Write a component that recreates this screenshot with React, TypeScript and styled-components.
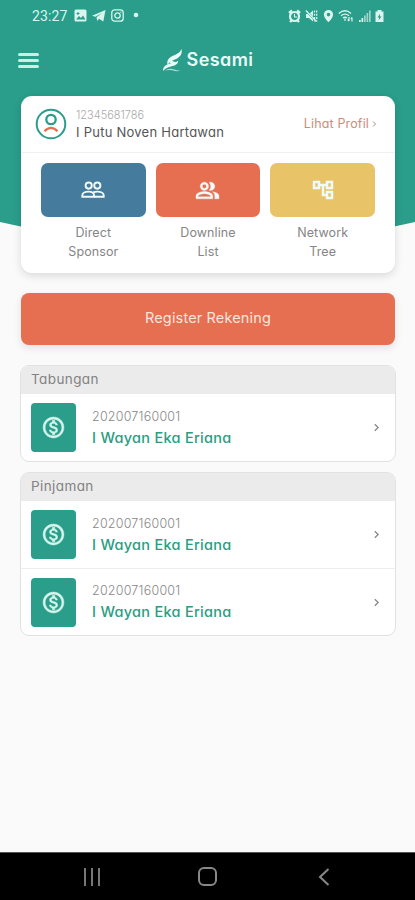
import React from 'react';
import styled, { createGlobalStyle } from 'styled-components';
import {
  MdOutlinePeopleAlt,
  MdOutlineAccountTree,
  MdOutlineMonetizationOn,
  MdChevronRight,
} from 'react-icons/md';

const GlobalStyle = createGlobalStyle`
  * { box-sizing: border-box; }
  body { margin: 0; background: #fafafa; }
`;

const Screen = styled.div`
  position: relative;
  display: flex;
  flex-direction: column;
  width: 415px;
  height: 900px;
  overflow: hidden;
  background: #fafafa;
  font-family: Inter, 'Open Sans', sans-serif;
  font-feature-settings: 'cv11' 1;
  isolation: isolate;

  &::before {
    content: '';
    position: absolute;
    inset: 0 0 auto;
    height: 267px;
    z-index: -1;
    background: #2a9d8b;
    clip-path: polygon(0 0, 100% 0, 100% 222px, 50% 100%, 0 222px);
  }
`;

const StatusBar = styled.div`
  display: flex;
  align-items: center;
  justify-content: space-between;
  height: 31px;
  padding: 0 31px 0 32px;
  color: #d9f5ee;
`;

const StatusGroup = styled.div<{ $gap: number }>`
  display: flex;
  align-items: center;
  gap: ${(p) => p.$gap}px;
  svg { display: block; }
`;

const Clock = styled.span`
  width: 37px;
  font: 400 14px/16px Roboto, sans-serif;
  letter-spacing: 0.1px;
`;

const AppBar = styled.header`
  display: grid;
  grid-template-columns: 1fr auto 1fr;
  align-items: center;
  height: 58px;
  padding: 0 18px;
`;

const MenuButton = styled.button`
  display: flex;
  flex-direction: column;
  justify-content: space-between;
  width: 21px;
  height: 15px;
  padding: 0;
  border: 0;
  background: none;
`;

const MenuLine = styled.span`
  height: 3px;
  border-radius: 1.5px;
  background: #cdeee5;
`;

const Brand = styled.div`
  display: flex;
  align-items: center;
  gap: 4px;
  color: #e9fbf6;
  font-size: 18px;
  font-weight: 600;
  line-height: 24px;
  letter-spacing: 0.4px;
`;

const Main = styled.main`
  display: flex;
  flex: 1;
  flex-direction: column;
  padding: 7px 20px 0 21px;
`;

const ProfileCard = styled.section`
  height: 177px;
  border-radius: 11px;
  background: #fff;
  box-shadow: 0 3px 9px rgba(0, 0, 0, 0.13);
`;

const ProfileRow = styled.div`
  display: flex;
  align-items: center;
  height: 57px;
  padding: 0 18px 0 14px;
  border-bottom: 1px solid #f0f0f0;
`;

const ProfileText = styled.div`
  flex: 1;
  margin-left: 9px;
`;

const MemberId = styled.div`
  color: #aaa;
  font-size: 11px;
  font-weight: 300;
  line-height: 16px;
`;

const MemberName = styled.div`
  color: #555;
  font-size: 13px;
  line-height: 19px;
  letter-spacing: 0.25px;
`;

const ProfileLink = styled.a`
  display: flex;
  align-items: center;
  gap: 3px;
  color: #ce8c7b;
  font-size: 12.5px;
  line-height: 18px;
  letter-spacing: 0.15px;
`;

const Actions = styled.div`
  display: grid;
  grid-template-columns: repeat(3, 1fr);
  gap: 10px;
  padding: 10px 20px 0;
`;

const Action = styled.div`
  display: flex;
  flex-direction: column;
  align-items: center;
`;

const ActionTile = styled.button<{ $color: string }>`
  display: grid;
  place-items: center;
  width: 100%;
  height: 54px;
  margin-bottom: 6px;
  padding: 0;
  border: 0;
  border-radius: 7px;
  background: ${(p) => p.$color};
  color: #f0fafa;
  svg { display: block; }
  svg > path[fill='none'] { stroke: none; }
`;

const ActionLabel = styled.span`
  color: #858585;
  font-size: 12.5px;
  line-height: 19px;
  letter-spacing: 0.1px;
`;

const RegisterButton = styled.button`
  flex: none;
  height: 52px;
  margin: 20px 0;
  padding: 0 0 3px;
  border: 0;
  border-radius: 8px;
  background: #e66f51;
  box-shadow: 0 3px 8px rgba(0, 0, 0, 0.1);
  color: #fbe4dc;
  font: inherit;
  font-feature-settings: inherit;
  font-size: 14.5px;
  letter-spacing: 0.15px;
`;

const AccountPanel = styled.section`
  margin: 0 -1px 10px;
  border: 1px solid #e2e2e2;
  border-radius: 9px;
  background: #fff;
  overflow: hidden;
`;

const PanelTitle = styled.h2`
  height: 28px;
  margin: 0;
  padding: 0 10px;
  background: #ebebeb;
  color: #828282;
  font-size: 13.5px;
  font-weight: 400;
  line-height: 27px;
  letter-spacing: 0.4px;
`;

const AccountRow = styled.div`
  display: flex;
  align-items: center;
  height: 67px;
  padding: 0 11px 0 10px;
  & + & { border-top: 1px solid #ededed; }
`;

const AccountIcon = styled.div`
  display: grid;
  place-items: center;
  width: 45px;
  height: 49px;
  border-radius: 4px;
  background: #2a9d8b;
  color: #d6f5ec;
  svg > path[fill='none'] { stroke: none; }
`;

const AccountText = styled.div`
  flex: 1;
  margin-left: 16px;
  padding-bottom: 2px;
`;

const AccountNumber = styled.div`
  color: #888;
  font-size: 12.5px;
  font-weight: 300;
  line-height: 21px;
  letter-spacing: 0.22px;
`;

const AccountName = styled.div`
  color: #2a9d7f;
  font-size: 14.5px;
  font-weight: 500;
  line-height: 21px;
  letter-spacing: 0.28px;
`;

const NavBar = styled.nav`
  display: grid;
  grid-template-columns: 116px 116px 116px;
  justify-content: center;
  justify-items: center;
  align-items: center;
  height: 48px;
  border-top: 1px solid #555;
  background: #000;
  svg { display: block; }
`;

function StatusIcons() {
  return (
    <StatusGroup $gap={4.5}>
      <svg width="13" height="14" viewBox="0 0 13 14" fill="none" stroke="currentColor">
        <circle cx="6.5" cy="7.5" r="4.5" strokeWidth="2.2" />
        <path d="M1 4 4 1.5M12 4 9 1.5M2 13l2-2M11 13l-2-2" strokeWidth="2.4" />
        <path d="M6.5 5v3H9" strokeWidth="1.1" />
      </svg>
      <svg width="13" height="14" viewBox="0 0 13 14" fill="currentColor">
        <path d="M1 5h3l4-3.5v11L4 9H1z" />
        <path d="M.8 1.5 12 13" stroke="#2a9d8b" strokeWidth="2" />
        <path d="M.8 1.5 11.5 12.5" stroke="currentColor" strokeWidth="1.4" />
        <path d="M9.5 1.5v11M11.7 1.5v11" stroke="currentColor" strokeWidth="1.3" strokeDasharray="2 1.3" />
      </svg>
      <svg width="11" height="14" viewBox="0 0 11 14" fill="currentColor">
        <path fillRule="evenodd" d="M5.5 1A4.6 4.6 0 0 0 .9 5.6C.9 9 5.5 13.3 5.5 13.3S10.1 9 10.1 5.6A4.6 4.6 0 0 0 5.5 1zm0 2.8a1.8 1.8 0 1 1 0 3.6 1.8 1.8 0 0 1 0-3.6z" />
      </svg>
      <svg width="16" height="14" viewBox="0 0 16 14" fill="none" stroke="currentColor" strokeWidth="1.4">
        <path d="M.8 4.5Q7 -.8 13 4.5M3 6.8Q7 3.5 11 6.8M5 9Q7 7.3 9 9" />
        <path d="M7 9.5v2.5M11 8v4m-1.3-1.5L11 12M14 12.5v-4m-1.2 1.3L14 8.5" strokeWidth="1.2" />
      </svg>
      <svg width="12" height="14" viewBox="0 0 12 14" fill="currentColor">
        <path d="M0 11h1.7v2H0zM2.5 9h1.7v4H2.5z" />
        <path d="M5 6.5h1.7V13H5zM7.5 4h1.7v9H7.5zM10 1.5h1.7V13H10z" opacity=".65" />
      </svg>
      <svg width="9" height="14" viewBox="0 0 9 14" fill="currentColor">
        <path fillRule="evenodd" d="M2.5 1h4v1.5h2V13H.5V2.5h2zM5 5 2.5 8.5h1.6L3.8 11l2.7-3.5H5z" />
      </svg>
    </StatusGroup>
  );
}

function BrandMark() {
  return (
    <svg width="21" height="25" viewBox="0 0 21 25" fill="currentColor">
      <path d="M19.2 .8C21 5.8 18 9.3 13.5 11.3 10.5 12.6 7 14.2 5.6 16.8 4.3 12 7.5 9.4 11.5 7.6 15.5 5.8 18.8 4.3 19.2 .8z" />
      <path d="M16.2 12.8C16 16.5 13 17.5 9 18.5 5.5 19.5 2.8 20.6 1 23c-.2-4.4 3-6.3 7-7.5 3.5-1 6.5-1.2 8.2-2.7z" />
      <path d="M8.5 12.5 14.8 14.6 13 16l-5-1z" />
      <path d="M2.5 22.8q5-3.3 9-1.5 3 1.3 7 1.5-4 1.100-8-.5-4-.8-8 .5z" opacity=".7" />
    </svg>
  );
}

function SponsorIcon() {
  return (
    <svg width="24" height="18" viewBox="0 0 24 18" fill="none" stroke="currentColor" strokeWidth="1.9">
      <circle cx="7.7" cy="4.6" r="3.1" />
      <circle cx="16.3" cy="4.6" r="3.1" />
      <path d="M1.3 15.7v-1.4c0-2.4 3.2-3.7 6.2-3.7s5.5 1.3 5.5 3.7v1.4z" />
      <path d="M12.2 11.4c1.2-.5 2.7-.8 4.2-.8 3 0 6.3 1.3 6.3 3.7v1.4H13" />
    </svg>
  );
}

const actions = [
  { color: '#457b9d', lines: ['Direct', 'Sponsor'], icon: <SponsorIcon /> },
  {
    color: '#e66f51',
    lines: ['Downline', 'List'],
    icon: <MdOutlinePeopleAlt size={25} stroke="currentColor" strokeWidth={0.35} />,
  },
  {
    color: '#e8c368',
    lines: ['Network', 'Tree'],
    icon: <MdOutlineAccountTree size={24} stroke="currentColor" strokeWidth={0.5} />,
  },
];

const panels = [
  { title: 'Tabungan', rows: [{ number: '202007160001', name: 'I Wayan Eka Eriana' }] },
  {
    title: 'Pinjaman',
    rows: [
      { number: '202007160001', name: 'I Wayan Eka Eriana' },
      { number: '202007160001', name: 'I Wayan Eka Eriana' },
    ],
  },
];

export default function App() {
  return (
    <Screen>
      <GlobalStyle />
      <StatusBar>
        <StatusGroup $gap={5}>
          <Clock>23:27</Clock>
          <svg width="13" height="13" viewBox="0 0 13 13">
            <rect x=".5" y=".5" width="12" height="12" rx="1.5" fill="currentColor" />
            <path d="M2 10.5 5 7l2 2 2-2.5 2.5 4z" fill="#2a9d8b" />
            <path d="M2.5 4.5h3M4 3v3" stroke="#2a9d8b" />
          </svg>
          <svg width="14" height="13" viewBox="0 0 14 13" fill="currentColor">
            <path d="M0 6.7 13.5 1 11.3 12.5 7 9.7 5.3 12 4.5 8.3 10 4 3.3 7.7z" />
          </svg>
          <svg width="13" height="13" viewBox="0 0 13 13" fill="none" stroke="currentColor" strokeWidth="1.3">
            <rect x=".8" y=".8" width="11.4" height="11.4" rx="2.8" />
            <circle cx="6.5" cy="6.5" r="2.7" />
            <path d="M9.4 3.2h1" />
          </svg>
          <svg width="15" height="13" viewBox="0 0 15 13" fill="currentColor">
            <circle cx="7" cy="6" r="2.3" />
          </svg>
        </StatusGroup>
        <StatusIcons />
      </StatusBar>

      <AppBar>
        <MenuButton aria-label="Menu">
          <MenuLine />
          <MenuLine />
          <MenuLine />
        </MenuButton>
        <Brand>
          <BrandMark />
          <span>Sesami</span>
        </Brand>
      </AppBar>

      <Main>
        <ProfileCard>
          <ProfileRow>
            <svg width="32" height="32" viewBox="0 0 32 32" fill="none" stroke="#2a9d8b" strokeWidth="2">
              <circle cx="16" cy="16" r="14.3" />
              <circle cx="16" cy="11.5" r="4.7" strokeWidth="2.3" />
              <path d="M9.5 23.3Q16 16.5 22.5 23.3" stroke="#e66f51" strokeWidth="2.3" />
            </svg>
            <ProfileText>
              <MemberId>12345681786</MemberId>
              <MemberName>I Putu Noven Hartawan</MemberName>
            </ProfileText>
            <ProfileLink>
              Lihat Profil
              <svg width="5" height="8" viewBox="0 0 5 8" fill="none" stroke="#a88f88">
                <path d="m1 1.5 2.5 2.5L1 6.5" />
              </svg>
            </ProfileLink>
          </ProfileRow>
          <Actions>
            {actions.map((a) => (
              <Action key={a.lines[0]}>
                <ActionTile $color={a.color}>{a.icon}</ActionTile>
                {a.lines.map((line) => (
                  <ActionLabel key={line}>{line}</ActionLabel>
                ))}
              </Action>
            ))}
          </Actions>
        </ProfileCard>

        <RegisterButton>Register Rekening</RegisterButton>

        {panels.map((panel) => (
          <AccountPanel key={panel.title}>
            <PanelTitle>{panel.title}</PanelTitle>
            {panel.rows.map((row, i) => (
              <AccountRow key={i}>
                <AccountIcon>
                  <MdOutlineMonetizationOn size={25} stroke="currentColor" strokeWidth={0.45} />
                </AccountIcon>
                <AccountText>
                  <AccountNumber>{row.number}</AccountNumber>
                  <AccountName>{row.name}</AccountName>
                </AccountText>
                <MdChevronRight size={15} color="#858585" />
              </AccountRow>
            ))}
          </AccountPanel>
        ))}
      </Main>

      <NavBar>
        <svg width="18" height="18" viewBox="0 0 18 18" stroke="#777" strokeWidth="2">
          <path d="M2 0v18M9 0v18M16 0v18" />
        </svg>
        <svg width="19" height="19" viewBox="0 0 19 19" fill="none" stroke="#888" strokeWidth="2">
          <rect x="1" y="1" width="17" height="17" rx="5" />
        </svg>
        <svg width="12" height="18" viewBox="0 0 12 18" fill="none" stroke="#888" strokeWidth="2">
          <path d="M10.5 1 2 9l8.5 8" />
        </svg>
      </NavBar>
    </Screen>
  );
}
